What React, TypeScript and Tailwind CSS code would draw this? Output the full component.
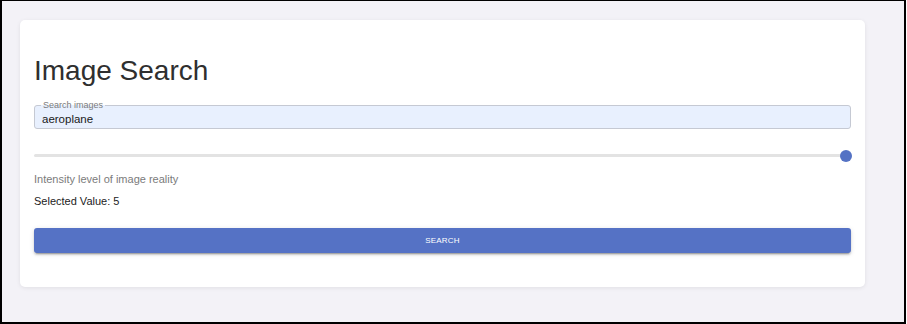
import React from "react";

export default function App() {
  return (
    <div className="w-[906px] h-[324px] border-t border-l-2 border-r-2 border-b-2 border-black bg-[#f3f2f7] font-['Liberation_Sans',Arial,sans-serif]">
      <div className="mt-[19px] ml-[18px] w-[845px] h-[267px] bg-white rounded-[5px] shadow-[0_1px_4px_rgba(0,0,0,0.08)] px-[14px] pt-[35px] pb-[34px] flex flex-col">
        <h1 className="text-[28px] leading-[32px] text-[#2f2f2f] font-normal">Image Search</h1>

        <div className="relative mt-[18px] h-[24px] border border-[#c5c9d3] rounded-[3px] bg-[#e8f0fe]">
          <span className="absolute left-[6px] top-[-6px] px-[2px] text-[9px] leading-[10px] text-[#7a7a7a] bg-[linear-gradient(to_bottom,#ffffff_55%,#e8f0fe_55%)]">
            Search images
          </span>
          <input
            readOnly
            value="aeroplane"
            className="w-full h-full bg-transparent outline-none px-[7px] text-[11.5px] text-[#1a1a1a] font-['Liberation_Sans',Arial,sans-serif]"
          />
        </div>

        <div className="relative mt-[21px] h-[12px] mr-[5px]">
          <div className="absolute left-0 right-0 top-[4px] h-[3px] rounded-full bg-[#e3e3e3]" />
          <div className="absolute right-[-6px] top-0 w-[12px] h-[12px] rounded-full bg-[#5472c4]" />
        </div>

        <p className="mt-[11px] text-[11px] leading-[13px] text-[#7b7b7b]">Intensity level of image reality</p>
        <p className="mt-[9px] text-[11px] leading-[13px] text-[#222222]">Selected Value: 5</p>

        <button className="mt-[20px] h-[25px] w-full rounded-[3px] bg-[#5572c5] text-white text-[8px] tracking-[0.23px] uppercase shadow-[0_3px_1px_-2px_rgba(0,0,0,0.2),0_2px_2px_0_rgba(0,0,0,0.14),0_1px_5px_0_rgba(0,0,0,0.12)] font-['Liberation_Sans',Arial,sans-serif]">
          Search
        </button>
      </div>
    </div>
  );
}
